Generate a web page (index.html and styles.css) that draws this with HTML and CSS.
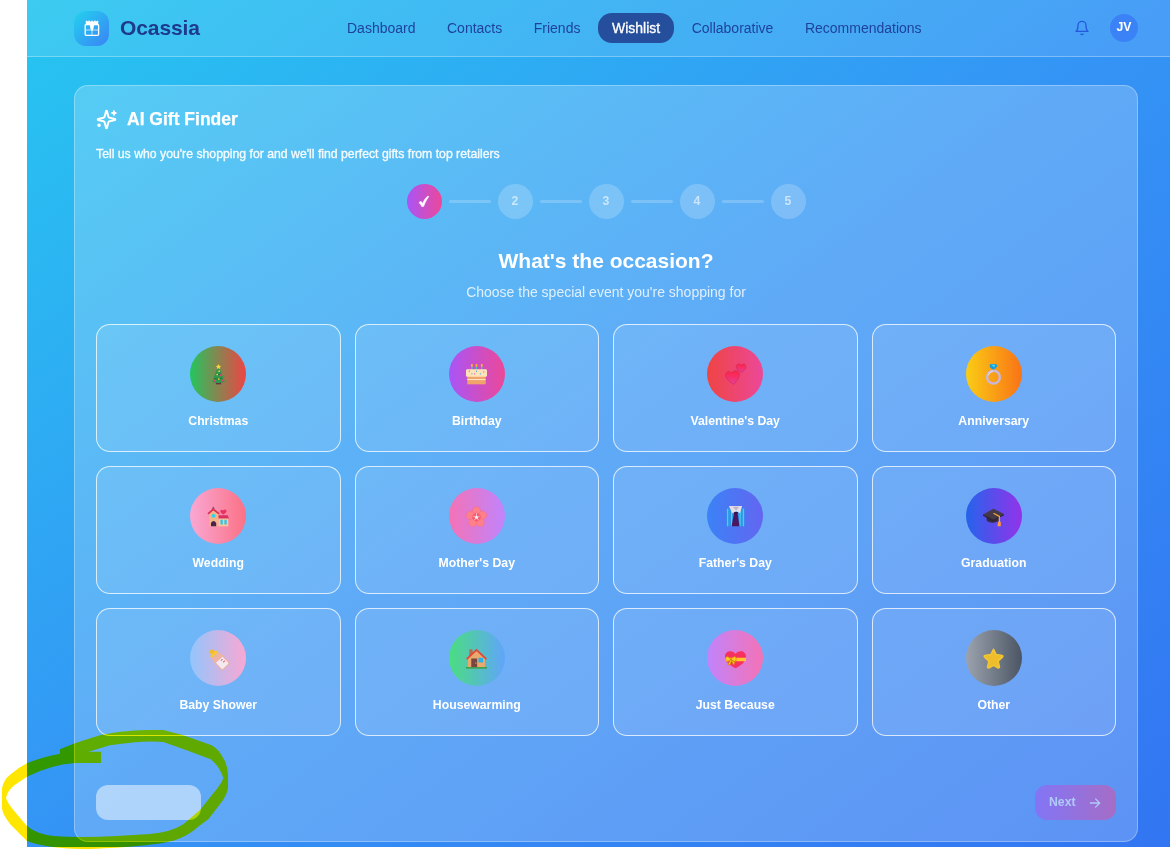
FILE: index.html
```html
<!DOCTYPE html>
<html lang="en">
<head>
<meta charset="utf-8">
<title>Ocassia - Wishlist</title>
<link rel="stylesheet" href="styles.css">
</head>
<body>
<div class="page">
  <header class="topbar">
    <a class="brand">
      <span class="brand-mark">
        <svg width="18" height="18" viewBox="0 0 18 18" fill="none" stroke="#fff" stroke-width="1.3"><rect x="2.200" y="5.500" width="13.400" height="10.800" rx="1"/><path d="M9 6v10M3 11h12" stroke-width=".7"/><path d="M3 1.800l2 1 1-1.300 1.400 1.500L9 1.800l1.600 1.200L12 1.500l1 1.300 2-1v3.800H3z" fill="#fff" stroke-width=".5"/><path d="M6.800 6h4.400l-.9 4L9 12l-1.500-2z" fill="#fff" stroke="none"/></svg>
      </span>
      <span class="brand-name">Ocassia</span>
    </a>
    <nav class="nav">
      <a>Dashboard</a><a>Contacts</a><a>Friends</a><a class="active">Wishlist</a><a>Collaborative</a><a>Recommendations</a>
    </nav>
    <div class="tools">
      <svg width="16" height="16" viewBox="0 0 24 24" fill="none" stroke="#2558dc" stroke-width="2" stroke-linecap="round" stroke-linejoin="round"><path d="M6 8a6 6 0 0 1 12 0c0 7 3 9 3 9H3s3-2 3-9"/><path d="M10.300 21a1.940 1.940 0 0 0 3.400 0"/></svg>
      <span class="avatar">JV</span>
    </div>
  </header>

  <main class="panel">
    <div class="title-row">
      <svg width="21" height="21" viewBox="0 0 24 24" fill="none" stroke="#fff" stroke-width="2.300" stroke-linecap="round" stroke-linejoin="round"><path d="M9.940 15.500A2 2 0 0 0 8.500 14.060l-6.140-1.580a.5.5 0 0 1 0-.96L8.500 9.940A2 2 0 0 0 9.940 8.500l1.580-6.140a.5.5 0 0 1 .96 0l1.580 6.140a2 2 0 0 0 1.440 1.440l6.140 1.580a.5.5 0 0 1 0 .96l-6.140 1.580a2 2 0 0 0-1.440 1.440l-1.580 6.140a.5.5 0 0 1-.96 0z"/><path d="M20.500 2.500v4M22.500 4.500h-4"/><circle cx="3.500" cy="18.500" r=".9" fill="#fff"/></svg>
      <h1>AI Gift Finder</h1>
    </div>
    <p class="lead">Tell us who you're shopping for and we'll find perfect gifts from top retailers</p>

    <div class="steps">
      <span class="step done"><svg width="12" height="14" viewBox="0 0 12 14"><path d="M1 7.500l2-1.200 1.600 2.200C6 5.200 7.600 2.700 10 1l.8.600C8.700 4.300 7 7.600 5.700 11.300L3.900 11.700C3.300 10.200 2.200 8.800 1 7.500z" fill="#fff" stroke="#fff" stroke-width=".6"/></svg></span>
      <i class="bar"></i><span class="step">2</span>
      <i class="bar"></i><span class="step">3</span>
      <i class="bar"></i><span class="step">4</span>
      <i class="bar"></i><span class="step">5</span>
    </div>

    <h2>What's the occasion?</h2>
    <p class="sub">Choose the special event you're shopping for</p>

    <div class="grid">
      <div class="card"><span class="disc christmas"><svg class="emo" viewBox="0 0 32 32"><path d="M12 27h8v4h-8z" fill="#6b3348"/><path d="M16 4l5 9-2 .500 5 7-2 .500 4 6q-10 4-20 0l4-6-2-.500 5-7-2-.500z" fill="#2f9a4b"/><path d="M11 15q6 3 9 0M9 22q8 3 13-1" stroke="#1d6b3a" stroke-width="1.200" fill="none"/><path d="M16 0l1.200 2.600 2.800.300-2 2 .500 2.800L16 6.300l-2.500 1.400.500-2.800-2-2 2.800-.300z" fill="#ffd33b"/><circle cx="17" cy="11" r="1.300" fill="#ffc83d"/><circle cx="14" cy="16" r="1.300" fill="#ffd84c"/><circle cx="19.500" cy="17" r="1.500" fill="#e83e78"/><circle cx="16.500" cy="23" r="1.300" fill="#ffc83d"/><circle cx="10.500" cy="25.500" r="1.500" fill="#e83e78"/><circle cx="22.500" cy="25" r="1.500" fill="#e83e78"/></svg></span><b>Christmas</b></div>
      <div class="card"><span class="disc birthday"><svg class="emo" viewBox="0 0 32 32"><path d="M9 3v6M16 3v6M24 3v6" stroke="#3dc6b5" stroke-width="2"/><path d="M9 0v4M16 0v4M24 0v4" stroke="#ffb02e" stroke-width="2.600"/><path d="M2 17h28v14H2z" fill="#f0a36b"/><path d="M2 23h28v1.500H2z" fill="#ffe9c4"/><rect x="0" y="8" width="32" height="11.500" rx="2" fill="#ffe3b8"/><g fill="#f0569b"><circle cx="5" cy="11" r="1"/><circle cx="13" cy="15" r="1"/><circle cx="27" cy="12" r="1"/></g><g fill="#48a8e8"><circle cx="9" cy="15" r="1"/><circle cx="16" cy="11" r="1"/><circle cx="22" cy="15" r="1"/></g></svg></span><b>Birthday</b></div>
      <div class="card"><span class="disc valentine"><svg class="emo" viewBox="0 0 32 32"><defs><linearGradient id="h1" x2="0" y2="1"><stop offset="0" stop-color="#ff2442"/><stop offset="1" stop-color="#e83d98"/></linearGradient></defs><g fill="url(#h1)" stroke="#c92760" stroke-width=".8"><path d="M13 31C8 28 2 24 1 18c-1-6 6-9 9-4 3-5 11-5 12 1 1 5-4 12-9 16z"/><path d="M25 13c-4-2-8-5-8-9 0-5 6-5 8-2 2-4 7-2 7 2s-4 7-7 9z"/></g></svg></span><b>Valentine's Day</b></div>
      <div class="card"><span class="disc anniversary"><svg class="emo" viewBox="0 0 32 32"><circle cx="16" cy="20" r="9.700" fill="none" stroke="#c9b6d9" stroke-width="3.600"/><path d="M8 17a9 9 0 0 1 7-6" fill="none" stroke="#eee2f5" stroke-width="1.500"/><path d="M11 0h9l2 3-4 5h-4l-4-4z" fill="#189fd8"/><path d="M12 1h7l-2 4z" fill="#43d7f5"/></svg></span><b>Anniversary</b></div>
      <div class="card"><span class="disc wedding"><svg class="emo" viewBox="0 0 32 32"><path d="M8 1v6M6 3.500h4" stroke="#86536a" stroke-width="1.500"/><path d="M16 17h15v14H16z" fill="#ffc49c"/><path d="M15 14h15l2 5H15z" fill="#d93163"/><path d="M2 12l6-6 8 6v19H2z" fill="#f5b489"/><path d="M0 12l8-7 9 7" fill="none" stroke="#dd2e50" stroke-width="2.500"/><circle cx="8.500" cy="15" r="3" fill="#27d5ee"/><path d="M4.500 31v-5q4-6 8 0v5z" fill="#49234f"/><path d="M19 21h3.500v7H19zM25 21h3.500v7H25z" fill="#21c9ed"/><path d="M23 13c-3-2-5-4-4-6 1-2 3-1 4 0 1-2 4-2 5 0s-2 5-5 6z" fill="#e9345f"/></svg></span><b>Wedding</b></div>
      <div class="card"><span class="disc mother"><svg class="emo" viewBox="0 0 32 32"><g fill="#ff8088" stroke="#f9627c" stroke-width=".5"><circle cx="16" cy="7.500" r="6.300"/><circle cx="25.200" cy="14.200" r="6.300"/><circle cx="21.700" cy="25" r="6.300"/><circle cx="10.300" cy="25" r="6.300"/><circle cx="6.800" cy="14.200" r="6.300"/></g><circle cx="16" cy="17" r="6.500" fill="#fa5a70"/><path d="M16 11v6m-5-1.500l5 1.500 5-1.500m-5 1.500l-3.500 5m3.500-5l3.500 5" stroke="#ffd4df" stroke-width="1.200"/><circle cx="16" cy="17" r="2.300" fill="#fff0f4"/></svg></span><b>Mother's Day</b></div>
      <div class="card"><span class="disc father"><svg class="emo" viewBox="0 0 32 32"><path d="M2 5l6-4h16l6 4v26H2z" fill="#3195e8"/><path d="M4 4v27M10 5v26M23 5v26M28 4v27" stroke="#4cd1f5" stroke-width="1.700"/><path d="M14 10h5l3 21H10z" fill="#4a1763"/><path d="M6 0h20l-3 11-6-3-6 3z" fill="#e4dce9"/><path d="M12 1h9l-4 6z" fill="#bcb2c7"/><path d="M14 9h6l-2 4h-3z" fill="#381150"/></svg></span><b>Father's Day</b></div>
      <div class="card"><span class="disc graduation"><svg class="emo" viewBox="0 0 32 32"><path d="M5 15l1 8q8 5 18 0v-9z" fill="#352b3c"/><path d="M0 13L16 4l16 8-16 10z" fill="#443849"/><path d="M0 13v2l15 8 17-9v-2L16 21z" fill="#2b2332"/><path d="M16 11l9 5v10" fill="none" stroke="#f5a83a" stroke-width="2"/><path d="M23 24h4v7h-5z" fill="#ff9b37"/></svg></span><b>Graduation</b></div>
      <div class="card"><span class="disc baby"><svg class="emo" viewBox="0 0 32 32"><g transform="translate(0 1) rotate(-43 16 16) translate(2.500 2) scale(.86)"><path d="M12 0q0-5 4-5t4 5l2 4H10z" fill="#f4bd27"/><rect x="8" y="2" width="16" height="5" rx="2" fill="#f8c839"/><path d="M8 7h16l2 6v20q0 3-3 3H9q-3 0-3-3V13z" fill="#edb3a4"/><path d="M8 18h16v14q0 2-2 2H10q-2 0-2-2z" fill="#f5e9f1"/><path d="M17 21h4M18 26h4" stroke="#e96b80" stroke-width="2"/></g></svg></span><b>Baby Shower</b></div>
      <div class="card"><span class="disc house"><svg class="emo" viewBox="0 0 32 32"><path d="M5 2h5v11H5z" fill="#b76c4e"/><path d="M3 15L16 3l13 12v15H3z" fill="#e9a86c"/><path d="M0 29h32v2.500H0z" fill="#3e9f50"/><path d="M1 17L16 3l15 14" fill="none" stroke="#e44438" stroke-width="2.600"/><path d="M8 16h9v13H8z" fill="#79453f"/><path d="M19 15h7v7h-7z" fill="#28afe8"/><circle cx="15" cy="23" r="1" fill="#f7c13e"/></svg></span><b>Housewarming</b></div>
      <div class="card"><span class="disc because"><svg class="emo" viewBox="0 0 32 32"><path d="M16 31C8 27 0 21 0 13 0 5 10 2 16 9 22 2 32 5 32 13s-8 14-16 18z" fill="#f7315f"/><path d="M0 15h32v5H1z" fill="#ffc52d"/><path d="M9 17q-8-8-8 0 0 7 8 0 8-8 8 0 0 7-8 0M9 17l-5 9 4-1 2-6 3 7 2-4z" fill="#ffcb22" stroke="#cf8100"/></svg></span><b>Just Because</b></div>
      <div class="card"><span class="disc other"><svg class="emo" viewBox="0 0 32 32"><path d="M16 2l4 8 9 1.500q2 1 .5 2.500L23 20l2 9q-.5 2-2.500 1L16 26.500 9.500 30Q7 31 7 29l2-9-6.500-6Q1 12.500 3 11.500L12 10z" fill="#eebd2c" stroke="#f3c433" stroke-width="2.500" stroke-linejoin="round"/></svg></span><b>Other</b></div>
    </div>

    <div class="actions">
      <button class="back" aria-label="Back"></button>
      <button class="next">Next <svg width="14" height="14" viewBox="0 0 24 24" fill="none" stroke="currentColor" stroke-width="2.200" stroke-linecap="round" stroke-linejoin="round"><path d="M4 12h16M13 5l7 7-7 7"/></svg></button>
    </div>
  </main>
</div>
<svg class="marker" width="230" height="130" viewBox="0 0 690 390"><path fill="#ffe600" fill-rule="evenodd" d="M180 88C230 66 270 56 300 46C360 32 420 29 490 30L550 46L635 76Q656 88 670 115Q684 138 684 165V205Q680 226 665 246L625 298L600 316Q560 352 520 362C460 376 360 384 250 387Q130 384 80 362L30 312Q6 280 6 265V205Q10 180 30 164Q55 143 81 130Q120 112 180 101ZM265 95H303V129H225Q150 135 81 170L45 194Q22 212 18 233Q20 245 42 272L81 318Q110 342 160 348Q240 354 350 348L450 342Q510 338 550 313L600 270L640 220Q662 195 670 175Q660 140 632 118L560 91L490 66Q430 60 330 76Z"/></svg>
</body>
</html>
```
FILE: styles.css
```css
* { box-sizing: border-box; }
html { background: #fff; }
body {
  margin: 0;
  position: relative;
  height: 850px;
  overflow: hidden;
  background: #fff;
  font-family: "Liberation Sans", Arial, sans-serif;
  font-size: 14px;
  color: #fff;
}
.page {
  margin-left: 27px;
  height: 847px;
  background: linear-gradient(to bottom right, #26c6f0 0%, #3494f5 50%, #3275f2 100%);
}
.topbar {
  height: 57px;
  padding: 0 32px 0 47px;
  display: flex;
  align-items: center;
  justify-content: space-between;
  background: rgba(255, 255, 255, .1);
  border-bottom: 1px solid rgba(255, 255, 255, .3);
}
.brand { display: flex; align-items: center; gap: 11px; width: 259px; }
.brand-mark {
  width: 35px;
  height: 35px;
  border-radius: 12px;
  display: grid;
  place-items: center;
  background: linear-gradient(135deg, #22d3ee, #3b82f6);
}
.brand-name { font-size: 21px; font-weight: 700; color: #1e3a8a; letter-spacing: -.1px; }
.nav { display: flex; gap: 3.5px; flex: 1; }
.nav a {
  padding: 0 14px;
  height: 30px;
  line-height: 30px;
  border-radius: 14px;
  color: #1e429a;
}
.nav .active { background: #254f9d; color: #fff; -webkit-text-stroke: .3px #fff; }
.tools { display: flex; align-items: center; gap: 20px; }
.avatar {
  width: 28px;
  height: 28px;
  border-radius: 50%;
  background: #3b82f6;
  font-size: 12.25px;
  font-weight: 700;
  line-height: 26px;
  text-align: center;
}
.panel {
  margin: 28px 32px 0 47px;
  height: 757px;
  padding: 21px;
  display: flex;
  flex-direction: column;
  background: rgba(255, 255, 255, .21);
  border: 1px solid rgba(255, 255, 255, .3);
  border-radius: 14px;
}
.title-row { display: flex; align-items: center; gap: 10px; height: 24px; }
h1, h2, p { margin: 0; }
h1 { font-size: 17.5px; line-height: 24px; -webkit-text-stroke: .25px #fff; }
.lead {
  margin-top: 15px;
  font-size: 12.25px;
  line-height: 17px;
  color: rgba(255, 255, 255, .9);
  -webkit-text-stroke: .35px rgba(255, 255, 255, .9);
}
.steps {
  margin-top: 21px;
  display: flex;
  justify-content: center;
  align-items: center;
  gap: 7px;
}
.step {
  width: 35px;
  height: 35px;
  border-radius: 50%;
  background: rgba(255, 255, 255, .2);
  color: rgba(255, 255, 255, .6);
  font-size: 12.25px;
  font-weight: 700;
  line-height: 34px;
  text-align: center;
}
.step.done { display: grid; place-items: center; background: linear-gradient(to right, #a855f7, #ec4899); }
.bar { width: 42px; height: 3px; border-radius: 2px; background: rgba(255, 255, 255, .2); }
h2 { margin-top: 28px; font-size: 21px; line-height: 28px; text-align: center; }
.sub { margin-top: 7px; line-height: 21px; text-align: center; color: rgba(255, 255, 255, .8); }
.grid {
  margin-top: 21px;
  display: grid;
  grid-template-columns: repeat(4, 1fr);
  grid-auto-rows: 128px;
  gap: 14px;
}
.card {
  display: flex;
  flex-direction: column;
  align-items: center;
  padding-top: 21px;
  border: 1px solid rgba(255, 255, 255, .75);
  border-radius: 14px;
  background: rgba(255, 255, 255, .1);
}
.card b { margin-top: 11px; font-size: 12.25px; line-height: 17px; }
.disc { width: 56px; height: 56px; border-radius: 50%; display: grid; place-items: center; }
.emo { width: 21px; height: 21px; overflow: visible; }
.christmas { background: linear-gradient(to right, #22c55e, #ef4444); }
.birthday { background: linear-gradient(to right, #a855f7, #ec4899); }
.valentine { background: linear-gradient(to right, #ef4444, #ec4899); }
.anniversary { background: linear-gradient(to right, #facc15, #f97316); }
.wedding { background: linear-gradient(to right, #f9a8d4, #fb7185); }
.mother { background: linear-gradient(to right, #f472b6, #c084fc); }
.father { background: linear-gradient(to right, #3b82f6, #6366f1); }
.graduation { background: linear-gradient(to right, #2563eb, #9333ea); }
.baby { background: linear-gradient(to right, #93c5fd, #f9a8d4); }
.house { background: linear-gradient(to right, #4ade80, #60a5fa); }
.because { background: linear-gradient(to right, #c084fc, #f472b6); }
.other { background: linear-gradient(to right, #9ca3af, #4b5563); }
.actions { margin-top: 49px; display: flex; justify-content: space-between; }
button { height: 35px; border: 0; border-radius: 12px; font: 700 12.25px "Liberation Sans", Arial, sans-serif; }
.back { width: 105px; background: rgba(255, 255, 255, .5); }
.next {
  width: 81px;
  padding: 0 14px 2px;
  display: flex;
  align-items: center;
  justify-content: space-between;
  color: #fff;
  background: linear-gradient(to right, #a855f7, #ec4899);
  opacity: .5;
}
.next svg { position: relative; top: 1px; }
.marker { position: absolute; left: 0; top: 720px; mix-blend-mode: darken; }
```
